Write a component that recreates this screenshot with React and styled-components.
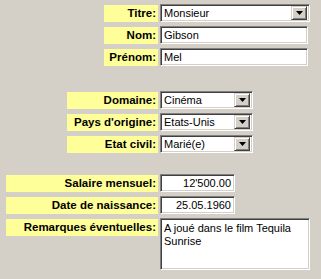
import React from 'react'
import styled, { createGlobalStyle } from 'styled-components'

const GlobalStyle = createGlobalStyle`
    html, body {
        margin: 0;
        padding: 0;
        background: #d4d0c8;
    }
    body {
        font-family: 'Liberation Sans', Arial, sans-serif;
        font-size: 11px;
        color: #000;
    }
`

const Page = styled.div`
    display: flex;
    flex-direction: column;
    padding-top: 4px;
    width: 321px;
    height: 279px;
    box-sizing: border-box;
`
const Group = styled.div`
    display: flex;
    flex-direction: column;
    gap: 4px;
    margin-bottom: ${(props) => props.after || 0}px;
`
const Row = styled.div`
    display: flex;
    align-items: flex-start;
    gap: 2px;
`
const Label = styled.div`
    box-sizing: border-box;
    width: ${(props) => props.width}px;
    margin-left: ${(props) => 158 - props.width}px;
    height: 17px;
    margin-top: 1px;
    background: #ffff99;
    font-weight: bold;
    font-size: 11.5px;
    text-align: right;
    padding-right: 2px;
    line-height: 17px;
    white-space: nowrap;
`
const Sunken = styled.div`
    box-sizing: border-box;
    width: ${(props) => props.width}px;
    height: ${(props) => props.height || 18}px;
    background: #fff;
    border: 1px solid;
    border-color: #808080 #fff #fff #808080;
    box-shadow: inset 1px 1px #404040, inset -1px -1px #d4d0c8;
    display: flex;
    align-items: ${(props) => (props.multi ? 'flex-start' : 'center')};
    justify-content: ${(props) => (props.right ? 'flex-end' : 'flex-start')};
    padding: ${(props) => (props.multi ? '3px 3px' : '0 3px')};
    line-height: 13px;
    white-space: ${(props) => (props.multi ? 'normal' : 'nowrap')};
`
const SelectBox = styled(Sunken)`
    padding: 2px 2px 2px 3px;
    justify-content: space-between;
`
const SelectButton = styled.div`
    box-sizing: border-box;
    width: 16px;
    height: 14px;
    background: #d4d0c8;
    border: 1px solid;
    border-color: #d4d0c8 #404040 #404040 #d4d0c8;
    box-shadow: inset 1px 1px #fff, inset -1px -1px #808080;
    display: flex;
    align-items: center;
    justify-content: center;
`

function Select({ width, value }) {
    return (
        <SelectBox width={width}>
            <span>{value}</span>
            <SelectButton>
                <svg width="7" height="4" viewBox="0 0 7 4">
                    <path d="M0 0h7L3.5 4z" fill="#000" />
                </svg>
            </SelectButton>
        </SelectBox>
    )
}

export default function App() {
    return (
        <Page>
            <GlobalStyle />
            <Group after={25}>
                <Row>
                    <Label width={54}>Titre:</Label>
                    <Select width={150} value="Monsieur" />
                </Row>
                <Row>
                    <Label width={54}>Nom:</Label>
                    <Sunken width={148}>Gibson</Sunken>
                </Row>
                <Row>
                    <Label width={54}>Prénom:</Label>
                    <Sunken width={148}>Mel</Sunken>
                </Row>
            </Group>
            <Group after={21}>
                <Row>
                    <Label width={91}>Domaine:</Label>
                    <Select width={93} value="Cinéma" />
                </Row>
                <Row>
                    <Label width={91}>Pays d'origine:</Label>
                    <Select width={93} value="Etats-Unis" />
                </Row>
                <Row>
                    <Label width={91}>Etat civil:</Label>
                    <Select width={93} value="Marié(e)" />
                </Row>
            </Group>
            <Group>
                <Row>
                    <Label width={152}>Salaire mensuel:</Label>
                    <Sunken width={75} right>12'500.00</Sunken>
                </Row>
                <Row>
                    <Label width={152}>Date de naissance:</Label>
                    <Sunken width={75} right>25.05.1960</Sunken>
                </Row>
                <Row>
                    <Label width={152}>Remarques éventuelles:</Label>
                    <Sunken width={150} height={52} multi>
                        A joué dans le film Tequila Sunrise
                    </Sunken>
                </Row>
            </Group>
        </Page>
    )
}
